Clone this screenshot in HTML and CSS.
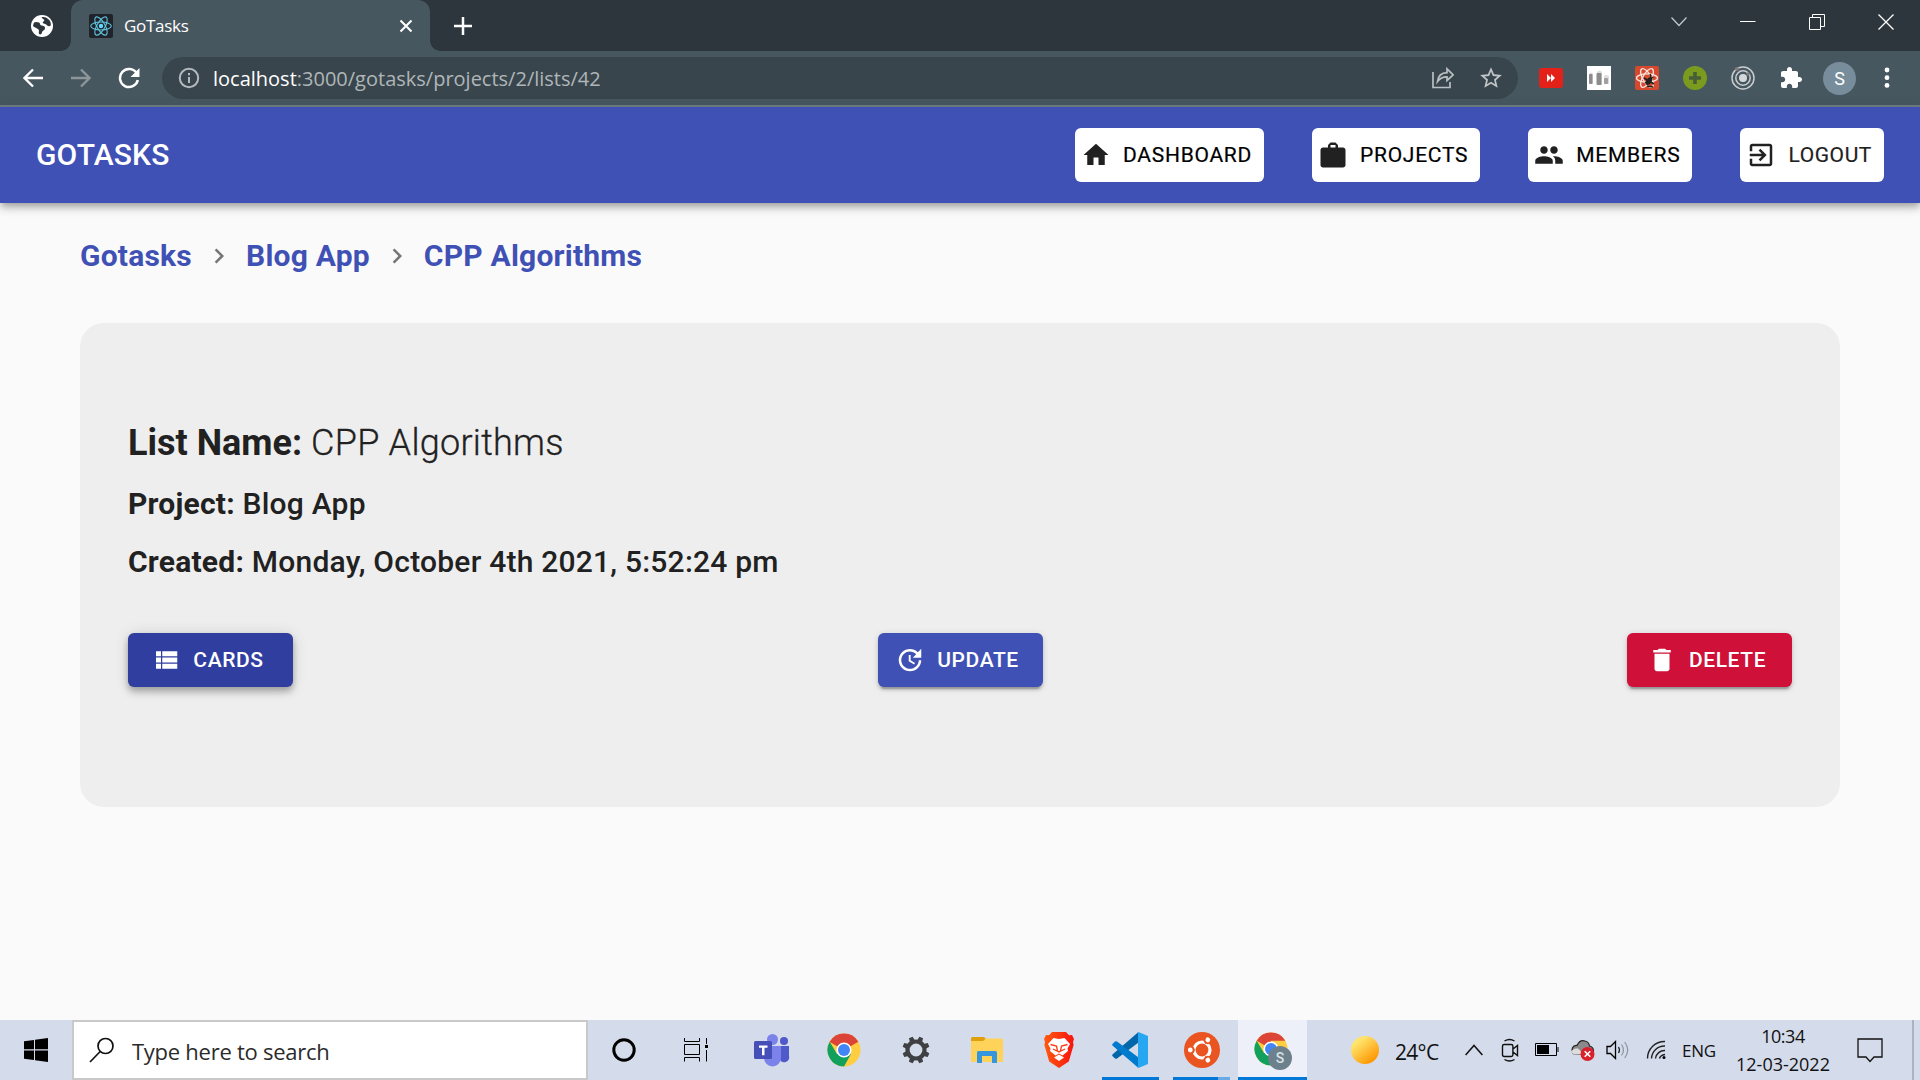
FILE: index.html
```html
<!DOCTYPE html>
<html lang="en">
<head>
<meta charset="utf-8">
<title>GoTasks</title>
<link rel="stylesheet" href="styles.css">
</head>
<body>
<div class="screen">
  <header class="tabstrip">
    <svg class="globe" width="24" height="24" viewBox="0 0 24 24"><circle cx="12" cy="12" r="11" fill="#fff"/><path d="M4 8.500c2-1 3.500-.5 5 0 1.500.6.5 2.500 2.500 3 2 .4 3.500.5 3.500 2.500 0 2.500-2.500 2.200-3 4.500-.3 1.200-1.200 2.600-2.500 1.800-1.600-1 .2-3.300-1-4.800C7 13.800 3.500 13.500 3 11.500zM11.500 3.200c3-.8 5.500.3 7.500 2.600 1.500 1.800 2.100 3.700 1.800 5.700-1.800 1.300-3.600.4-4.300-.7-.7-1.200-3.200-.5-3.700-2-.5-1.300 1.700-1.300 1.500-2.600-.2-1.100-2.100-1.500-2.800-3z" fill="#2c363c"/></svg>
    <div class="tab">
      <svg class="favicon" width="24" height="24" viewBox="0 0 24 24"><rect width="24" height="24" rx="2" fill="#20232a"/><g fill="none" stroke="#61c5e0" stroke-width="1.100"><ellipse cx="12" cy="12" rx="10.300" ry="4"/><ellipse cx="12" cy="12" rx="10.300" ry="4" transform="rotate(60 12 12)"/><ellipse cx="12" cy="12" rx="10.300" ry="4" transform="rotate(120 12 12)"/></g><circle cx="12" cy="12" r="2.200" fill="#61dafb"/></svg>
      <span class="tab-title">GoTasks</span>
      <svg width="14" height="14" viewBox="0 0 14 14"><path d="M1.500 1.500l11 11M12.500 1.500l-11 11" stroke="#fff" stroke-width="2.100"/></svg>
    </div>
    <svg class="newtab" width="18" height="18" viewBox="0 0 18 18"><path d="M9 0v18M0 9h18" stroke="#fff" stroke-width="2.500"/></svg>
    <div class="winctl">
      <svg width="16" height="16" viewBox="0 0 16 16"><path d="M.5 3.500L8 11.500l7.500-8" fill="none" stroke="#c4c9cb" stroke-width="1.200"/></svg>
      <svg width="16" height="16" viewBox="0 0 16 16"><path d="M0 7.500h15.500" stroke="#fff"/></svg>
      <svg width="16" height="16" viewBox="0 0 16 16"><path d="M.5 3.500h11v12h-11zM3.500 3.500v-3h12v12h-4" fill="none" stroke="#fff"/></svg>
      <svg width="16" height="16" viewBox="0 0 16 16"><path d="M.5.5l15 15M15.500.5l-15 15" stroke="#fff" stroke-width="1.300"/></svg>
    </div>
  </header>

  <div class="toolbar">
    <svg width="20" height="20" viewBox="0 0 20 20"><path d="M20 10H2M10 1.500L1.500 10l8.500 8.500" fill="none" stroke="#fff" stroke-width="2.300"/></svg>
    <svg class="fwd" width="20" height="20" viewBox="0 0 20 20"><path d="M0 10h18M10 1.500l8.500 8.500-8.500 8.500" fill="none" stroke="#8c969b" stroke-width="2.300"/></svg>
    <svg class="reload" width="22" height="22" viewBox="0 0 22 22"><path d="M18.600 6.200A9 9 0 1 0 19.800 13" fill="none" stroke="#fff" stroke-width="2.500"/><path d="M21.500 1v9h-9z" fill="#fff"/></svg>
    <div class="omnibox">
      <svg width="22" height="22" viewBox="0 0 22 22"><circle cx="11" cy="11" r="9.200" fill="none" stroke="#b3babd" stroke-width="2"/><path d="M11 10v6M11 6v2.200" stroke="#b3babd" stroke-width="2"/></svg>
      <p class="url"><b class="host">localhost</b>:3000/gotasks/projects/2/lists/42</p>
      <svg width="22" height="22" viewBox="0 0 22 22"><path d="M1 5v15.500h17V15" fill="none" stroke="#b9bfc2" stroke-width="1.700"/><path d="M5.500 14.500c.6-5.500 4-8.600 9.500-8.800V1.800l6.200 6L15 13.500V9.800c-4 0-7 1.200-9.500 4.700z" fill="none" stroke="#b9bfc2" stroke-width="1.700"/></svg>
      <svg class="star" width="26" height="26" viewBox="0 0 24 24"><path fill="#c0c5c8" d="M22 9.240l-7.190-.62L12 2 9.190 8.630 2 9.240l5.460 4.730L5.820 21 12 17.270 18.180 21l-1.630-7.030L22 9.240zM12 15.400l-3.760 2.270 1-4.280-3.320-2.880 4.380-.38L12 6.100l1.710 4.040 4.380.38-3.320 2.880 1 4.280L12 15.400z"/></svg>
    </div>
    <div class="extensions">
      <svg width="24" height="24" viewBox="0 0 24 24"><rect y="2" width="24" height="20" rx="3" fill="#e32118"/><path d="M8 8l4 4-4 4zM12 8l4 4-4 4z" fill="#fff"/></svg>
      <svg width="24" height="24" viewBox="0 0 24 24"><path fill="#fff" d="M0 0h24v24H0z"/><path fill="#dedede" d="M2 8q2.500-3 4 0v10H2zM10 6q2.500-3 5 0v13h-5zM17 10q2.500-2 5 0v8h-5z"/><rect x="2" y="8" width="3.500" height="10" rx="1" fill="#8c8c8c"/><rect x="9.500" y="7" width="5" height="12" rx="1" fill="#8c8c8c"/><rect x="17" y="12" width="4" height="6" rx="1" fill="#a0a0a0"/></svg>
      <svg width="24" height="24" viewBox="0 0 24 24"><rect width="24" height="24" rx="2" fill="#d6492f"/><g fill="none" stroke="#fbe3dc" stroke-width="1.300"><ellipse cx="12" cy="12" rx="10.500" ry="4.200"/><ellipse cx="12" cy="12" rx="10.500" ry="4.200" transform="rotate(60 12 12)"/><ellipse cx="12" cy="12" rx="10.500" ry="4.200" transform="rotate(120 12 12)"/></g><ellipse cx="14" cy="15" rx="2.600" ry="4.500" fill="#20201e" transform="rotate(35 14 15)"/><path d="M9 12l10 6M10 17l8-6M12 20l6 1M15 8l1 3" stroke="#20201e" stroke-width="1.500"/></svg>
      <svg width="24" height="24" viewBox="0 0 24 24"><circle cx="12" cy="12" r="12" fill="#7b9b1e"/><path d="M12 6v12M6 12h12" stroke="#475e36" stroke-width="3.600"/></svg>
      <svg width="24" height="24" viewBox="0 0 24 24"><g fill="none" stroke="#c8cdcf" stroke-width="1.500"><circle cx="12" cy="12" r="11"/><circle cx="12" cy="12" r="7.200"/></g><circle cx="12" cy="12" r="4" fill="#d4d8da"/><circle cx="6" cy="3" r="2" fill="#85797a"/><circle cx="17" cy="8" r="1.700" fill="#85797a"/></svg>
      <svg width="24" height="24" viewBox="0 0 24 24"><path fill="#fff" d="M20.500 11H19V7c0-1.100-.9-2-2-2h-4V3.500C13 2.120 11.880 1 10.500 1S8 2.120 8 3.500V5H4c-1.100 0-1.990.9-1.990 2v3.800H3.500c1.490 0 2.700 1.210 2.700 2.700s-1.210 2.700-2.700 2.700H2V20c0 1.100.9 2 2 2h3.800v-1.500c0-1.490 1.210-2.700 2.700-2.700 1.490 0 2.700 1.210 2.700 2.700V22H17c1.100 0 2-.9 2-2v-4h1.500c1.380 0 2.500-1.120 2.500-2.500S21.880 11 20.500 11z"/></svg>
    </div>
    <span class="avatar">S</span>
    <svg width="6" height="22" viewBox="0 0 6 22"><g fill="#fff"><circle cx="3" cy="3" r="2.400"/><circle cx="3" cy="10.700" r="2.400"/><circle cx="3" cy="18.400" r="2.400"/></g></svg>
  </div>

  <main class="page">
    <nav class="appbar">
      <span class="brand">GOTASKS</span>
      <a class="btn nav-btn"><svg class="icon" viewBox="0 0 24 24"><path d="M10 20v-6h4v6h5v-8h3L12 3 2 12h3v8z"/></svg>DASHBOARD</a>
      <a class="btn nav-btn"><svg class="icon" viewBox="0 0 24 24"><path d="M20 6h-4V4l-2-2h-4L8 4v2H4c-1.100 0-2 .9-2 2v12c0 1.100.9 2 2 2h16c1.100 0 2-.9 2-2V8c0-1.100-.9-2-2-2zm-6 0h-4V4h4v2z"/></svg>PROJECTS</a>
      <a class="btn nav-btn"><svg class="icon" viewBox="0 0 24 24"><path d="M16 11c1.660 0 2.990-1.340 2.990-3S17.660 5 16 5c-1.660 0-3 1.340-3 3s1.340 3 3 3zm-8 0c1.660 0 2.990-1.340 2.990-3S9.660 5 8 5C6.340 5 5 6.340 5 8s1.340 3 3 3zm0 2c-2.330 0-7 1.170-7 3.500V19h14v-2.500c0-2.330-4.670-3.500-7-3.500zm8 0c-.29 0-.62.020-.97.050 1.160.84 1.970 1.970 1.970 3.450V19h6v-2.500c0-2.330-4.670-3.500-7-3.500z"/></svg>MEMBERS</a>
      <a class="btn nav-btn logout"><svg class="icon" viewBox="0 0 24 24"><path d="M10.090 15.590L11.500 17l5-5-5-5-1.410 1.410L12.670 11H3v2h9.670l-2.580 2.590zM19 3H5c-1.110 0-2 .9-2 2v4h2V5h14v14H5v-4H3v4c0 1.100.89 2 2 2h14c1.100 0 2-.9 2-2V5c0-1.100-.9-2-2-2z"/></svg>LOGOUT</a>
    </nav>
    <div class="crumbs">
      <a>Gotasks</a>
      <svg class="sep" viewBox="0 0 24 24"><path d="M10 6L8.590 7.410 13.170 12l-4.580 4.590L10 18l6-6z"/></svg>
      <a>Blog App</a>
      <svg class="sep" viewBox="0 0 24 24"><path d="M10 6L8.590 7.410 13.170 12l-4.580 4.590L10 18l6-6z"/></svg>
      <a>CPP Algorithms</a>
    </div>
    <section class="card">
      <h1 class="list-name"><b>List Name:</b> CPP Algorithms</h1>
      <p class="detail"><b>Project:</b> Blog App</p>
      <p class="detail"><b>Created:</b> Monday, October 4th 2021, 5:52:24 pm</p>
      <div class="actions">
        <a class="btn action hovered"><svg class="icon" viewBox="0 0 24 24"><path d="M4 14h4v-4H4v4zm0 5h4v-4H4v4zM4 9h4V5H4v4zm5 5h12v-4H9v4zm0 5h12v-4H9v4zM9 5v4h12V5H9z"/></svg>CARDS</a>
        <a class="btn action"><svg class="icon" viewBox="0 0 24 24"><path d="M21 10.120h-6.780l2.740-2.820c-2.730-2.700-7.150-2.800-9.880-.1-2.730 2.710-2.730 7.080 0 9.790s7.150 2.710 9.880 0C18.320 15.650 19 14.080 19 12.100h2c0 1.980-.88 4.550-2.640 6.290-3.510 3.480-9.210 3.480-12.720 0-3.500-3.470-3.530-9.110-.02-12.580s9.140-3.470 12.650 0L21 3v7.120zM12.500 8v4.250l3.500 2.080-.72 1.210L11 13V8h1.500z"/></svg>UPDATE</a>
        <a class="btn action danger"><svg class="icon" viewBox="0 0 24 24"><path d="M6 19c0 1.100.9 2 2 2h8c1.100 0 2-.9 2-2V7H6v12zM19 4h-3.500l-1-1h-5l-1 1H5v2h14V4z"/></svg>DELETE</a>
      </div>
    </section>
  </main>

  <footer class="taskbar">
    <div class="start"><svg width="24" height="24" viewBox="0 0 24 24"><path d="M0 3.200L10 1.900V11.300H0zM11 1.700L24 0V11.300H11zM0 12.500H10V22.100L0 20.800zM11 12.500H24V24L11 22.300z"/></svg></div>
    <div class="search">
      <svg width="26" height="26" viewBox="0 0 26 26"><g fill="none" stroke="#111" stroke-width="1.700"><circle cx="16.500" cy="9" r="7.500"/><path d="M11.200 14.500L1 25"/></g></svg>
      <span>Type here to search</span>
    </div>
    <div class="apps">
      <i class="app"><svg width="24" height="24" viewBox="0 0 24 24"><circle cx="12" cy="12" r="10.200" fill="none" stroke="#000" stroke-width="3"/></svg></i>
      <i class="app taskview"><svg width="24" height="24" viewBox="0 0 24 24"><path d="M.5 0v3.500h15V0M.5 6.500h15v10H.5zM.5 23.500v-4h15v4M22.500 0v6M22.500 12v11.500" fill="none" stroke="#000"/><path d="M21 7h3v3h-3z"/></svg></i>
      <i class="app"><svg width="36" height="34" viewBox="0 0 36 34"><circle cx="30" cy="8" r="4" fill="#5059c9"/><path d="M25 13h10v10a5 5 0 0 1-9 4z" fill="#5059c9"/><circle cx="18.500" cy="6.500" r="5.500" fill="#7b83eb"/><path d="M10 13h17v12a8.500 8.500 0 0 1-17 0z" fill="#7b83eb"/><rect y="8" width="18" height="18" rx="1.500" fill="#464eb8"/><path d="M5 12.500h8.500v2.300h-3v7.400H8v-7.400H5z" fill="#fff"/></svg></i>
      <i class="app"><svg width="34" height="34" viewBox="0 0 34 34"><circle cx="17" cy="17" r="16.500" fill="#ffcd40"/><path d="M17 17L2.700 8.750A16.500 16.500 0 0 1 31.300 8.750z" fill="#db4437"/><path d="M31.300 8.750L17 8.700V17L2.700 8.750z" fill="#db4437"/><path d="M2.700 8.750A16.500 16.500 0 0 0 17 33.500l7-12.400L10 21z" fill="#12a15d"/><circle cx="17" cy="17" r="7.600" fill="#fff"/><circle cx="17" cy="17" r="6" fill="#4285f4"/></svg></i>
      <i class="app"><svg width="28" height="28" viewBox="-14 -14 28 28"><circle r="8.500" fill="none" stroke="#3e4043" stroke-width="4.200"/><g fill="#3e4043"><path id="tooth" d="M-2.700-9l.7-4.600h4l.7 4.600z" transform="rotate(22.500)"/><use href="#tooth" transform="rotate(45)"/><use href="#tooth" transform="rotate(90)"/><use href="#tooth" transform="rotate(135)"/><use href="#tooth" transform="rotate(180)"/><use href="#tooth" transform="rotate(225)"/><use href="#tooth" transform="rotate(270)"/><use href="#tooth" transform="rotate(315)"/></g></svg></i>
      <i class="app"><svg width="32" height="28" viewBox="0 0 32 28"><path d="M0 2.500Q0 1 1.500 1H13l3 3v3H0z" fill="#dfa00c"/><path d="M0 5h12l3-2.500h15.500Q32 2.500 32 4v22H0z" fill="#ffd35a"/><path d="M6 27V16.500Q6 15 7.500 15h17q1.500 0 1.500 1.500V27h-5v-7H11v7z" fill="#3596dd"/></svg></i>
      <i class="app"><svg width="30" height="36" viewBox="0 0 30 36"><defs><linearGradient id="lion"><stop stop-color="#ff5a10"/><stop offset="1" stop-color="#f8130f"/></linearGradient></defs><path d="M8 0h14l3 3.300 3-.3 2 4-1 3 .6 3-4.800 16.500L15 36 5.200 29.500.4 13 1 10 0 7l2-4 3 .3z" fill="url(#lion)"/><path d="M9.500 6l5.500 1 5.500-1 5.500 6-2.500 4.500.5 2.500-5.500 4.500-3.500-2-3.500 2L6 19l.5-2.500L4 12zM15 22.500l5 3-5 3.500-5-3.500z" fill="#fff"/><path d="M6.500 12.500l6 1.500 1 5 1.500 1 1.500-1 1-5 6-1.500M9 17l4 2M21 17l-4 2" fill="none" stroke="#fb3b12" stroke-width="1.300"/></svg></i>
      <i class="app running"><svg width="36" height="36" viewBox="0 0 36 36"><path d="M26.500 0v10.500L5 26.500q-1 .7-2 0l-2.300-2.200q-1-1 0-2z" fill="#0065a9"/><path d="M26.500 36V25.500L5 9.500q-1-.7-2 0L.7 11.700q-1 1 0 2z" fill="#007acc"/><path d="M26.500 0L36 4v28l-9.500 4q-.5-.5-.5-1V1q0-.6.500-1z" fill="#27a6f2"/></svg></i>
      <i class="app running stacked"><svg width="36" height="36" viewBox="-18 -18 36 36"><circle r="18" fill="#e95420"/><circle r="8" fill="none" stroke="#fff" stroke-width="3.200"/><g id="friend"><path d="M-15-0h8" stroke="#e95420" stroke-width="1.200"/><circle cx="-11.300" r="3.900" fill="#e95420"/><circle cx="-11.700" r="2.400" fill="#fff"/></g><use href="#friend" transform="rotate(120)"/><use href="#friend" transform="rotate(240)"/></svg></i>
      <i class="app active"><svg width="38" height="38" viewBox="0 0 38 38"><circle cx="17" cy="17" r="16.500" fill="#ffcd40"/><path d="M17 17L2.700 8.750A16.500 16.500 0 0 1 31.300 8.750L17 8.700z" fill="#db4437"/><path d="M2.700 8.750A16.500 16.500 0 0 0 17 33.500l7-12.400L10 21z" fill="#12a15d"/><circle cx="17" cy="17" r="7.600" fill="#fff"/><circle cx="17" cy="17" r="6" fill="#4285f4"/><circle cx="26" cy="26" r="12" fill="#6c818c"/><text class="badge" x="26" y="31" text-anchor="middle">S</text></svg></i>
    </div>
    <div class="tray">
      <svg width="28" height="28" viewBox="0 0 28 28"><defs><linearGradient id="sun" x1=".15" y1=".1" x2=".8" y2=".9"><stop offset=".15" stop-color="#ffe46b"/><stop offset="1" stop-color="#ff9500"/></linearGradient></defs><circle cx="14" cy="14" r="14" fill="url(#sun)"/></svg>
      <span class="temp">24°C</span>
      <svg width="18" height="12" viewBox="0 0 18 12"><path d="M.6 11L9 1.500l8.400 9.500" fill="none" stroke="#111" stroke-width="1.500"/></svg>
      <svg width="18" height="24" viewBox="0 0 18 24"><path d="M3.200 6.500h7q1.700 0 1.700 1.700v8.600q0 1.700-1.700 1.700h-7q-1.700 0-1.700-1.700V8.200q0-1.700 1.700-1.700zM12 11l4.500-3.500v10L12 14M3.500 3q5-3 10 0M3.500 21.500q5 3 10 0" fill="none" stroke="#111" stroke-width="1.400"/></svg>
      <svg width="24" height="14" viewBox="0 0 24 14"><path d="M.5.5h21v12H.5zM23 4v5" fill="none" stroke="#000"/><path d="M2 2h12v9H2z"/></svg>
      <svg width="26" height="22" viewBox="0 0 26 22"><path d="M5 15a5 5 0 0 1 0-8q2-1 3-.6Q11 0 16 2q4 1 4.500 5 4 1 4 5t-4 4z" fill="#8a8a8a" stroke="#222" stroke-width="1.200"/><path d="M2 13q2-4 7-3.500l6 6H5z" fill="#ddd"/><circle cx="18.500" cy="15" r="7" fill="#d9202c"/><path d="M15.700 12.200l5.600 5.600M21.300 12.200l-5.600 5.600" stroke="#fff" stroke-width="1.600"/></svg>
      <svg width="24" height="20" viewBox="0 0 24 20"><path d="M1 6.500h3.500l5-5v17l-5-5H1z" fill="none" stroke="#000" stroke-width="1.300"/><path d="M12.500 7q2 3 0 6" fill="none" stroke="#222" stroke-width="1.300"/><path d="M15.500 4.500q4 5.500 0 11M18.700 2q6 8 0 16" fill="none" stroke="#8b93a0" stroke-width="1.200"/></svg>
      <svg width="20" height="20" viewBox="0 0 20 20"><g fill="none" stroke="#222" stroke-width="1.400"><path d="M1.500 18.500A17 17 0 0 1 19 1.500M5.500 18.500A13 13 0 0 1 19 6M9.500 18.500A9 9 0 0 1 19 10.500M13.500 18.500Q14.500 15 19 14.500"/></g><circle cx="18" cy="17.500" r="1.500"/></svg>
      <span class="lang">ENG</span>
      <div class="clock"><span class="time">10:34</span><span class="date">12-03-2022</span></div>
      <svg width="26" height="26" viewBox="0 0 26 26"><path d="M1 2h24v18h-8l-4 4.500L9 20H1z" fill="none" stroke="#111" stroke-width="1.300"/></svg>
      <div class="peek"></div>
    </div>
  </footer>
</div>
</body>
</html>
```

FILE: styles.css
```css
* { box-sizing: border-box; }
body { margin: 0; }
svg { display: block; flex: none; }
p, h1 { margin: 0; }

.screen {
  width: 1920px;
  height: 1080px;
  display: flex;
  flex-direction: column;
  overflow: hidden;
  font-family: Roboto, sans-serif;
}

/* Browser chrome */
.tabstrip {
  height: 51px;
  flex: none;
  display: flex;
  align-items: center;
  background: #2c363c;
  font-family: "Open Sans", sans-serif;
}
.globe { margin: 0 17px 0 30px; }
.tab {
  width: 359px;
  height: 51px;
  display: flex;
  align-items: center;
  padding: 0 17px 0 18px;
  background: #47575f;
  border-radius: 12px 12px 0 0;
  position: relative;
}
.tab::before, .tab::after {
  content: "";
  position: absolute;
  bottom: 0;
  width: 10px;
  height: 10px;
}
.tab::before { left: -10px; background: radial-gradient(circle at 0 0, transparent 9.500px, #47575f 10px); }
.tab::after { right: -10px; background: radial-gradient(circle at 100% 0, transparent 9.500px, #47575f 10px); }
.tab-title { flex: 1; margin-left: 11px; font-size: 17px; letter-spacing: -0.300px; color: #fff; }
.newtab { margin-left: 24px; }
.winctl { display: flex; gap: 53px; margin: -8px 26px 0 auto; }

.toolbar {
  height: 56px;
  flex: none;
  display: flex;
  align-items: center;
  padding: 0 30px 0 23px;
  background: #47575f;
  border-bottom: 2px solid #6f7d83;
}
.fwd { margin-left: 28px; }
.reload { margin-left: 27px; }
.omnibox {
  width: 1357px;
  height: 42px;
  margin-left: 22px;
  padding: 0 14px 0 16px;
  display: flex;
  align-items: center;
  background: #39454c;
  border-radius: 21px;
}
.url {
  flex: 1;
  margin-left: 13px;
  font: 20px "Open Sans", sans-serif;
  color: #afb6b9;
}
.host { font-weight: 400; color: #fff; }
.star { margin-left: 24px; }
.extensions { display: flex; gap: 24px; margin-left: 21px; }
.avatar {
  width: 33px;
  height: 33px;
  margin: 0 28px 0 20px;
  border-radius: 50%;
  background: #788d9b;
  color: #fff;
  font-size: 18px;
  line-height: 33px;
  text-align: center;
}

/* Application */
.page { flex: 1; background: #fafafa; }
.appbar {
  height: 96px;
  display: flex;
  align-items: center;
  padding: 0 36px;
  background: #3f51b5;
  box-shadow: 0 3px 6px -1.500px rgba(0,0,0,.2), 0 6px 7.500px rgba(0,0,0,.14), 0 1.500px 15px rgba(0,0,0,.12);
}
.brand { flex: 1; padding-bottom: 2px; color: #fff; font-size: 30px; font-weight: 500; letter-spacing: 0.150px; }
.btn {
  height: 54px;
  display: flex;
  align-items: center;
  border-radius: 6px;
  font-size: 21px;
  font-weight: 500;
  letter-spacing: 0.600px;
}
.icon { width: 30px; height: 30px; margin-right: 12px; fill: currentColor; }
.nav-btn { margin-left: 48px; padding: 0 12px 0 6px; background: #fff; color: #000; font-weight: 400; letter-spacing: 0.730px; -webkit-text-stroke: 0.200px; }
.logout { letter-spacing: 0.600px; color: #212121; }
.nav-btn .icon { fill: #212121; }
.brand + .nav-btn { margin-left: 0; }
.crumbs {
  display: flex;
  align-items: center;
  height: 45px;
  margin: 30px 80px 0;
  color: #3f51b5;
  font-size: 30px;
  font-weight: 700;
  letter-spacing: 0.225px;
}
.sep { width: 30px; height: 30px; margin: 0 12px; fill: #757575; }
.card {
  height: 484px;
  margin: 45px 80px 0;
  padding: 96px 48px 0;
  border-radius: 24px;
  background: #eee;
  color: #212121;
}
.card b { font-weight: 700; }
.list-name { height: 48px; line-height: 48px; font-size: 36px; font-weight: 300; letter-spacing: 0.260px; margin-bottom: 13px; -webkit-text-stroke: 0.300px; }
.list-name b { letter-spacing: 0; -webkit-text-stroke: 0; }
.detail { height: 48px; line-height: 48px; margin-bottom: 10px; font-size: 30px; font-weight: 500; letter-spacing: 0.225px; }
.actions { display: flex; justify-content: space-between; margin-top: 47px; }
.action {
  width: 165px;
  justify-content: center;
  padding-right: 6px;
  color: #fff;
  background: #3f51b5;
  box-shadow: 0 4.500px 1.500px -3px rgba(0,0,0,.2), 0 3px 3px rgba(0,0,0,.14), 0 1.500px 7.500px rgba(0,0,0,.12);
}
.hovered {
  background: #303f9f;
  box-shadow: 0 3px 6px -1.500px rgba(0,0,0,.2), 0 6px 7.500px rgba(0,0,0,.14), 0 1.500px 15px rgba(0,0,0,.12);
}
.danger { background: #cf1039; }

/* Taskbar */
.taskbar {
  height: 60px;
  flex: none;
  display: flex;
  background: #d4dbea;
  font-family: "Open Sans", sans-serif;
  color: #111;
}
.start { width: 72px; display: grid; place-items: center; }
.search {
  width: 516px;
  display: flex;
  align-items: center;
  gap: 17px;
  padding: 0 0 1px 15px;
  border: 2px solid #c9c9c9;
  background: #fff;
  color: #2b2b2b;
  font-size: 22px;
  letter-spacing: -0.260px;
}
.search span { padding-top: 2px; }
.apps { display: flex; }
.app { width: 71.600px; height: 60px; display: flex; align-items: center; justify-content: center; }
.taskview { width: 77px; padding-right: 4px; }
.running { background: linear-gradient(#0078d7, #0078d7) 50% 100% / 57px 3px no-repeat; }
.stacked { background: linear-gradient(90deg, #0078d7 79%, #67aae5 79%) 50% 100% / 57px 3px no-repeat; }
.active { width: 69px; background: #edf0f8; border-bottom: 3px solid #0078d7; padding: 5px 0 0 2px; }
.badge { font: 500 14px Roboto, sans-serif; fill: #d8e2e7; }
.tray {
  margin-left: auto;
  width: 576px;
  display: grid;
  grid-template-columns: 42px 70px 36px 36px 38px 32px 40px 36px 50px 118px 56px 22px;
  align-items: center;
  justify-items: center;
}
.temp { justify-self: start; padding: 4px 0 0 9px; font-size: 21px; letter-spacing: -0.700px; }
.lang { font-size: 17px; letter-spacing: -0.200px; }
.clock { display: grid; justify-items: center; font-size: 18px; line-height: 28px; }
.time { letter-spacing: -0.500px; }
.date { letter-spacing: 0; }
.peek { width: 2px; height: 60px; background: #a9b3c2; margin-left: 8px; }
```
